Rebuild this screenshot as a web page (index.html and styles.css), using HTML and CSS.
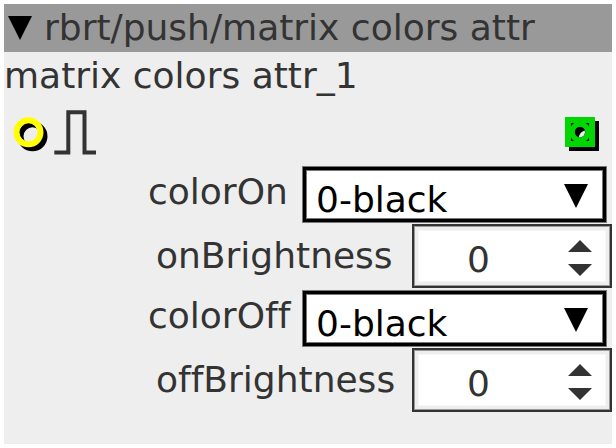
FILE: index.html
```
<!DOCTYPE html>
<html lang="en">
<head>
    <meta charset="UTF-8">
    <title>rbrt/push/matrix colors attr</title>
    <link rel="stylesheet" href="styles.css">
</head>
<body>
    <div class="object">
        <div class="titlebar">
            <svg class="arrow" width="24" height="24"><path d="M0 0H24L12 24Z"/></svg>
            <span class="title">rbrt/push/matrix colors attr</span>
        </div>
        <div class="name">matrix colors attr_1</div>

        <div class="ports">
            <svg class="inlet" width="84" height="48" viewBox="0 0 84 48">
                <circle class="ring-shadow" cx="20.500" cy="24.300" r="12"/>
                <circle class="ring" cx="16.500" cy="20.300" r="12"/>
                <path class="pulse" d="M42.300 40.500H56.300V0.300H72.500V40.500H84"/>
            </svg>
            <svg class="outlet" width="34" height="34" viewBox="0 0 34 34">
                <path d="M4 4H34V34H4Z"/>
                <path class="green" d="M0 0H30V30H0Z"/>
                <circle cx="15" cy="15" r="5.200"/>
                <path class="gap" d="M19.800 13.500A5 5 0 0 1 13.800 20C14.500 16.500 16.500 14.500 19.800 13.500Z"/>
                <path d="M6 6H9L6 9ZM24 6H21L24 9ZM6 24H9L6 21ZM24 24H21L24 21Z"/>
            </svg>
        </div>

        <div class="row row-select">
            <span class="label">colorOn</span>
            <div class="select">
                <span class="value">0-black</span>
                <svg class="arrow" width="24" height="24"><path d="M0 0H24L12 24Z"/></svg>
            </div>
        </div>
        <div class="row row-spin">
            <span class="label">onBrightness</span>
            <div class="spin">
                <span class="number">0</span>
                <svg width="24" height="36"><path d="M12 0L24 12H0ZM0 24H24L12 36Z"/></svg>
            </div>
        </div>
        <div class="row row-select">
            <span class="label">colorOff</span>
            <div class="select">
                <span class="value">0-black</span>
                <svg class="arrow" width="24" height="24"><path d="M0 0H24L12 24Z"/></svg>
            </div>
        </div>
        <div class="row row-spin">
            <span class="label">offBrightness</span>
            <div class="spin">
                <span class="number">0</span>
                <svg width="24" height="36"><path d="M12 0L24 12H0ZM0 24H24L12 36Z"/></svg>
            </div>
        </div>
    </div>
</body>
</html>
```

FILE: styles.css
```
* {
    box-sizing: border-box;
}
body {
    margin: 0;
    padding: 4px;
    background: #fff;
    font-family: "DejaVu Sans", sans-serif;
    font-size: 36px;
    font-variant-ligatures: none;
    line-height: 42px;
    color: #333;
    white-space: nowrap;
}
svg {
    display: block;
    flex: none;
    overflow: visible;
}
.object {
    width: 608px;
    height: 440px;
    background: #eee;
}
.titlebar {
    display: flex;
    height: 48px;
    padding: 3px 4px;
    gap: 12px;
    background: #999;
}
.titlebar .arrow {
    margin-top: 9px;
}
.name {
    height: 48px;
    padding-top: 3px;
}
.ports {
    display: flex;
    justify-content: space-between;
    height: 64px;
    padding: 12px 13px 0 8px;
}
.outlet {
    margin-top: 5px;
}
.ring-shadow,
.ring {
    fill: none;
    stroke: #000;
    stroke-width: 6;
}
.ring {
    stroke: #ff0;
}
.pulse {
    fill: none;
    stroke: #333;
    stroke-width: 4;
}
.green {
    fill: #00d600;
}
.gap {
    fill: #eee;
}

/* attribute rows */
.row {
    display: flex;
    justify-content: space-between;
}
.row-select {
    height: 60px;
    padding: 2px 5px 0 144px;
}
.row-spin {
    height: 64px;
    padding-left: 152px;
}
.row-select .label {
    margin-top: 5px;
}
.row-spin .label {
    margin-top: 11px;
}
.select {
    display: flex;
    justify-content: space-between;
    width: 305px;
    height: 57px;
    padding: 12px 18px 0 13px;
    border: 1px solid #777;
    background: #fff;
    box-shadow: inset 0 0 0 3px #000, inset 0 0 0 4px #777;
    color: #000;
}
.select .arrow {
    margin-top: 5px;
}
.spin {
    display: flex;
    justify-content: space-between;
    width: 200px;
    height: 64px;
    padding: 13px 18px 0 53px;
    border: 2px solid #333;
    background: #fff;
    box-shadow: inset 0 0 0 1px #999, inset 0 0 0 4px #eee, inset 0 0 0 5px #f7f7f7;
}
.spin svg {
    margin-top: 1px;
    fill: #333;
}
```
